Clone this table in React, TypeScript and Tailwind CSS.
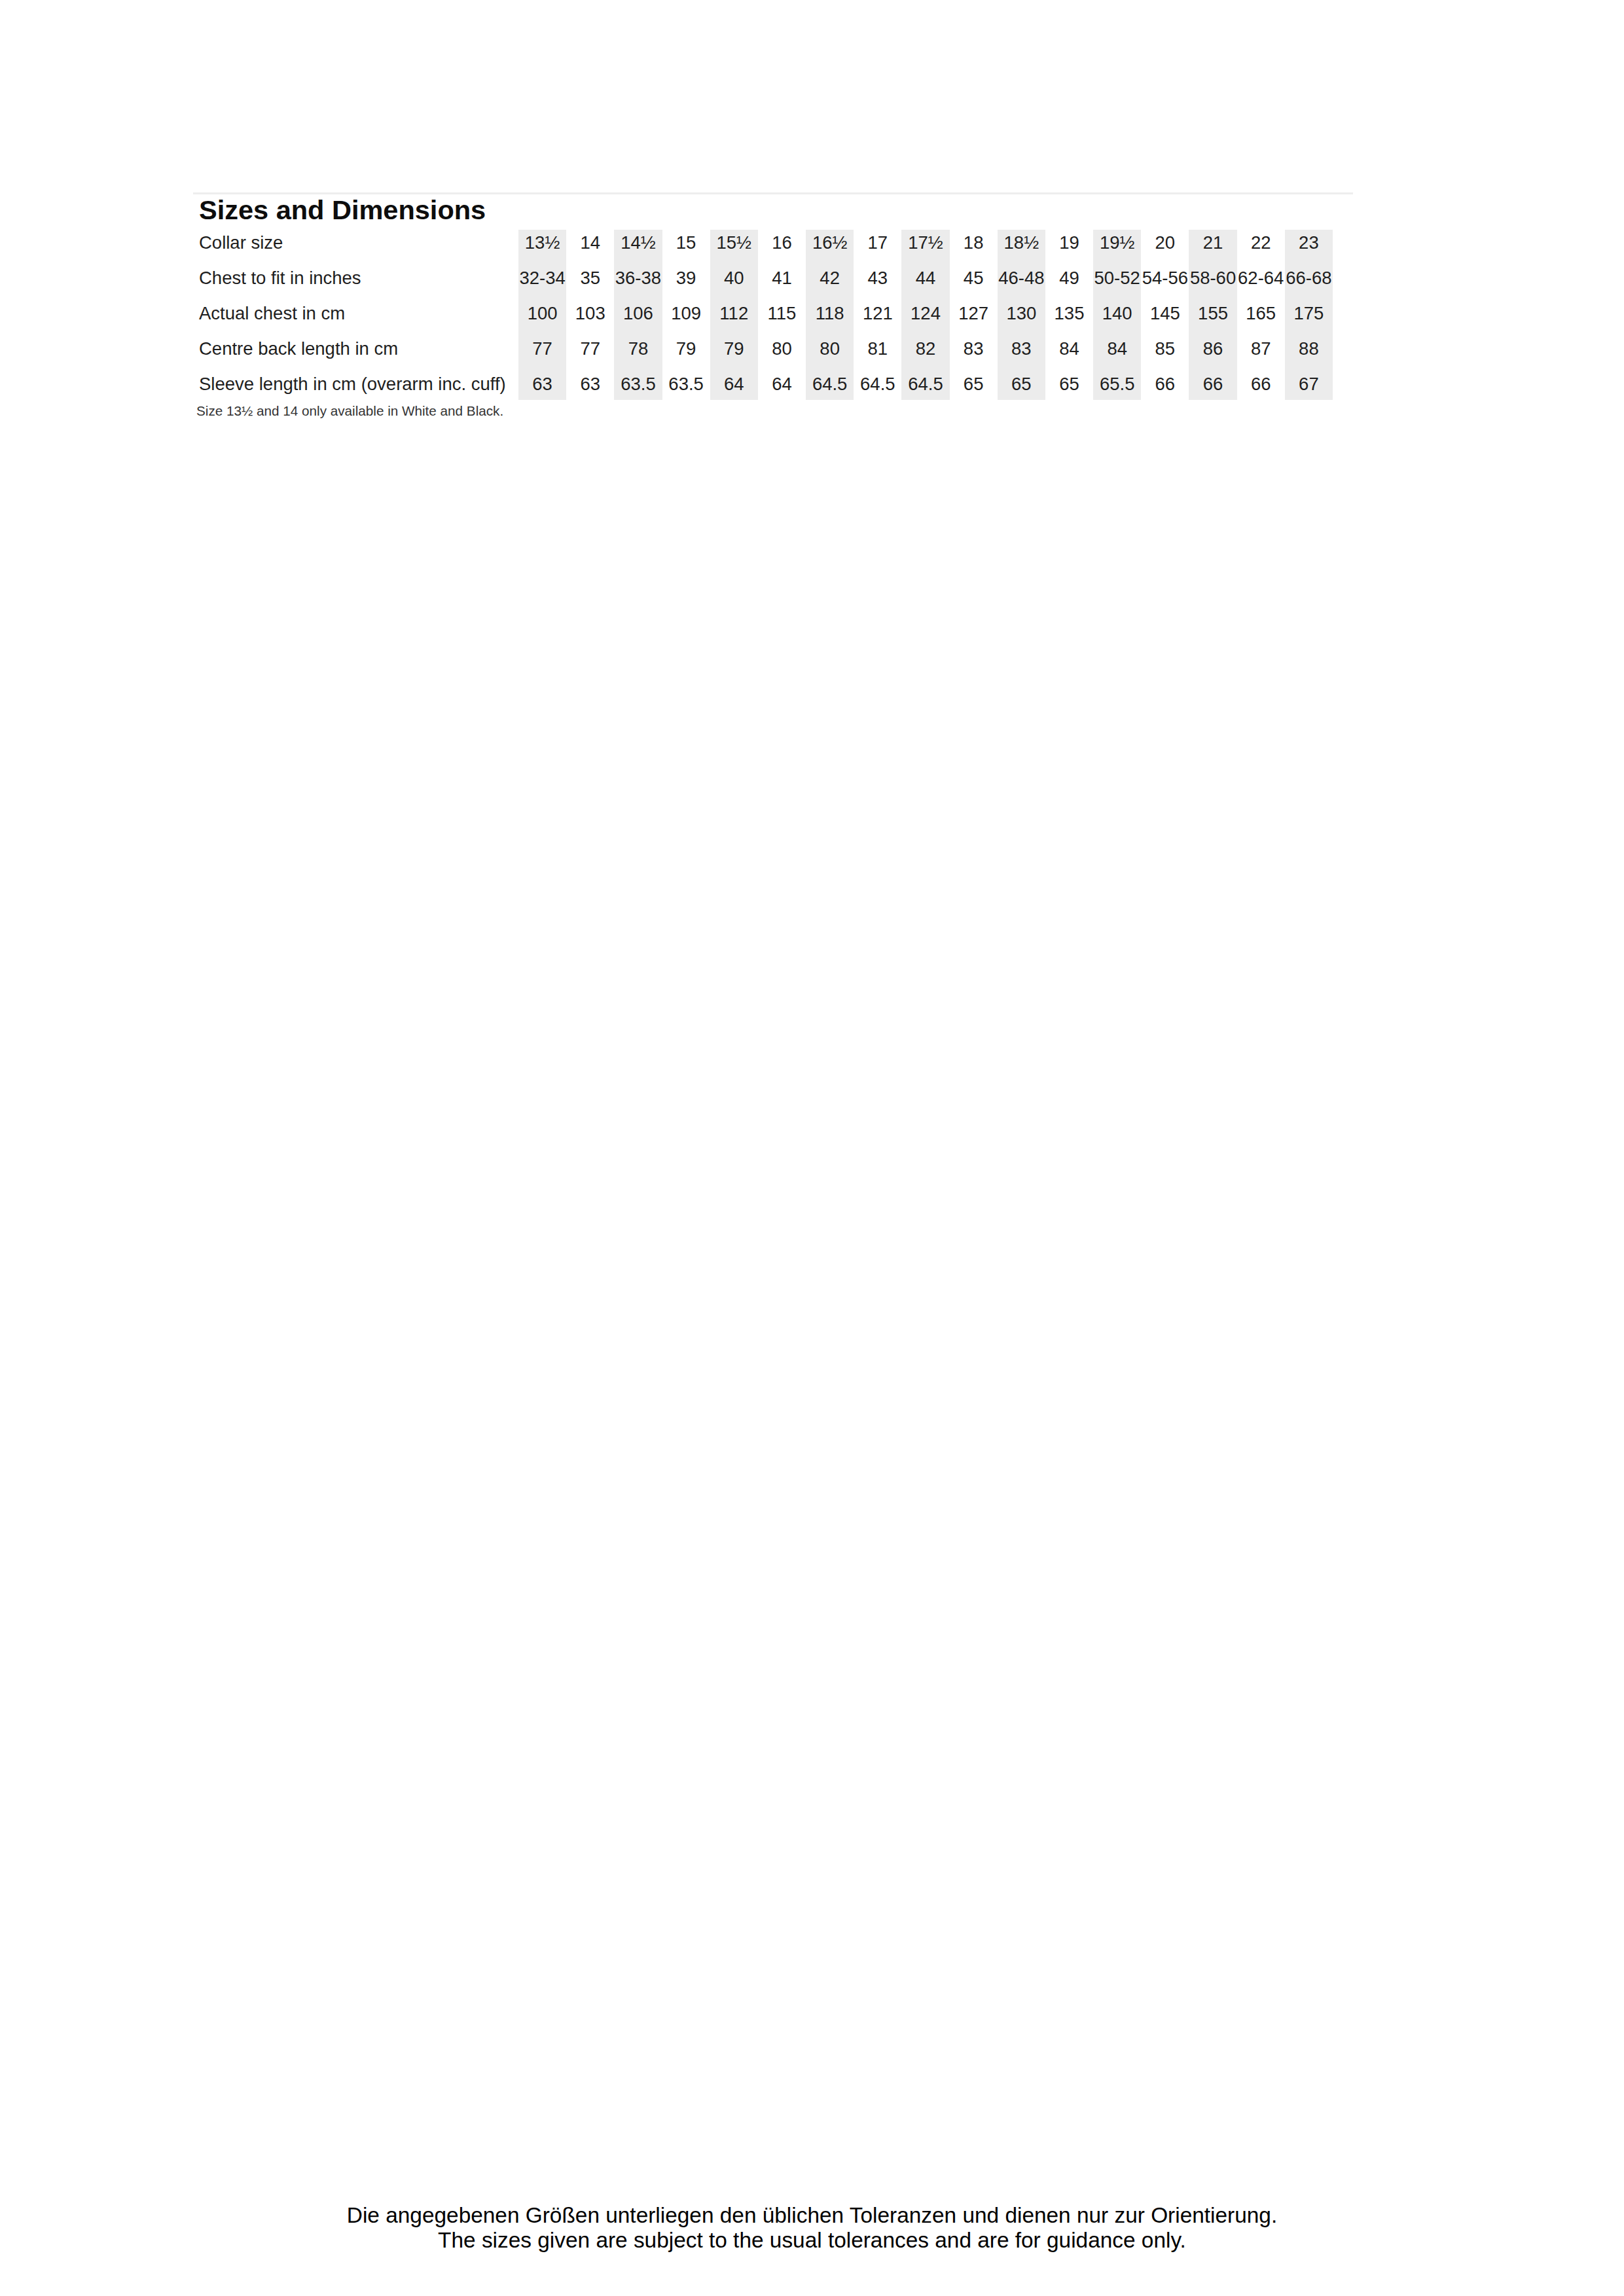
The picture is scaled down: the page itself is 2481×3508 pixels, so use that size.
import React from "react";

const rows: { label: string; values: string[] }[] = [
  {
    label: "Collar size",
    values: ["13½", "14", "14½", "15", "15½", "16", "16½", "17", "17½", "18", "18½", "19", "19½", "20", "21", "22", "23"],
  },
  {
    label: "Chest to fit in inches",
    values: ["32-34", "35", "36-38", "39", "40", "41", "42", "43", "44", "45", "46-48", "49", "50-52", "54-56", "58-60", "62-64", "66-68"],
  },
  {
    label: "Actual chest in cm",
    values: ["100", "103", "106", "109", "112", "115", "118", "121", "124", "127", "130", "135", "140", "145", "155", "165", "175"],
  },
  {
    label: "Centre back length in cm",
    values: ["77", "77", "78", "79", "79", "80", "80", "81", "82", "83", "83", "84", "84", "85", "86", "87", "88"],
  },
  {
    label: "Sleeve length in cm (overarm inc. cuff)",
    values: ["63", "63", "63.5", "63.5", "64", "64", "64.5", "64.5", "64.5", "65", "65", "65", "65.5", "66", "66", "66", "67"],
  },
];

export default function App() {
  return (
    <div className="w-[2481px] h-[3508px] bg-white flex flex-col font-['Liberation_Sans',Arial,sans-serif]">
      <div className="ml-[295px] mt-[294px] w-[1772px] border-t-[3px] border-[#eeeeee]">
        <h1 className="pl-[9px] text-[41.5px] leading-[47px] font-bold text-[#0d0d0d]">Sizes and Dimensions</h1>
        <div className="mt-[7px] flex flex-col">
          {rows.map((row, ri) => (
            <div
              key={row.label}
              className={ri === rows.length - 1 ? "flex h-[44px]" : "flex h-[54px]"}
            >
              <div className="w-[497px] shrink-0 pl-[9px] pt-[5px] text-[27.5px] leading-[30px] text-[#1e1e1e] whitespace-nowrap">
                {row.label}
              </div>
              <div className="w-[1244px] grid grid-cols-[repeat(17,minmax(0,1fr))]">
                {row.values.map((v, ci) => (
                  <div
                    key={ci}
                    className={
                      ci % 2 === 0
                        ? "bg-[#ececec] pt-[5px] text-center text-[27.5px] leading-[30px] text-[#1e1e1e] whitespace-nowrap"
                        : "pt-[5px] text-center text-[27.5px] leading-[30px] text-[#1e1e1e] whitespace-nowrap"
                    }
                  >
                    {v}
                  </div>
                ))}
              </div>
            </div>
          ))}
        </div>
        <p className="mt-[5px] pl-[5px] text-[20.7px] leading-[24px] text-[#333333] whitespace-nowrap">
          Size 13½ and 14 only available in White and Black.
        </p>
      </div>
      <div className="mt-auto mb-[66px] text-center text-[33.4px] leading-[38px] text-black">
        <p>Die angegebenen Größen unterliegen den üblichen Toleranzen und dienen nur zur Orientierung.</p>
        <p>The sizes given are subject to the usual tolerances and are for guidance only.</p>
      </div>
    </div>
  );
}
